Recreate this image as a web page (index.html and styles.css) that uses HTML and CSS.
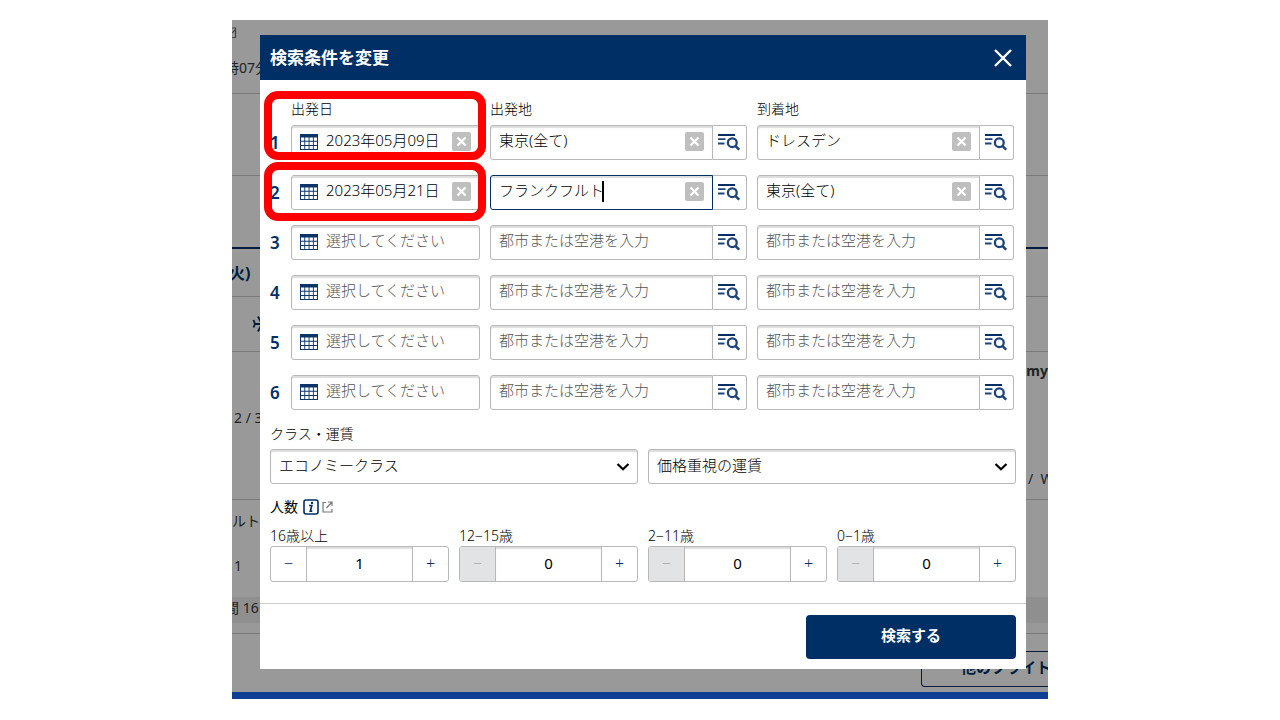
FILE: index.html
```html
<!DOCTYPE html>
<html lang="ja">
<head>
<meta charset="utf-8">
<title>検索条件を変更</title>
<link rel="stylesheet" href="styles.css">
</head>
<body>
<svg class="sprite" aria-hidden="true">
  <symbol id="calendar" viewBox="0 0 18 16">
    <path d="M0 0h18v16H0z" fill="#0b3468"/>
    <path d="M1 3.500h3.300v3.300H1zM5.200 3.500h3.400v3.300H5.200zM9.500 3.500h3.400v3.300H9.500zM13.800 3.500H17v3.300h-3.200zM1 7.700h3.300V11H1zM5.200 7.700h3.400V11H5.200zM9.500 7.700h3.400V11H9.500zM13.800 7.700H17V11h-3.200zM1 11.900h3.300V15H1zM5.200 11.900h3.400V15H5.200zM9.500 11.900h3.400V15H9.500zM13.800 11.900H17V15h-3.200z" fill="#fff"/>
  </symbol>
  <symbol id="lookup" viewBox="0 0 22 18">
    <path d="M0 2h17" fill="none" stroke="#002f65" stroke-width="2"/>
    <path d="M0 6.200h7.500M0 10.500h6.500" fill="none" stroke="#1d457a" stroke-width="1.800"/>
    <circle cx="14.300" cy="9.700" r="4.400" fill="none" stroke="#1d457a" stroke-width="2.300"/>
    <path d="M17.300 12.800l3.900 3.900" stroke="#1d457a" stroke-width="2.600"/>
  </symbol>
  <symbol id="cross" viewBox="0 0 19 19">
    <rect width="19" height="19" rx="2" fill="#bfbfbf"/>
    <path d="M5.500 5.500l8 8M13.500 5.500l-8 8" stroke="#fff" stroke-width="2.400"/>
  </symbol>
  <symbol id="chevron" viewBox="0 0 14 10">
    <path d="M1.500 2l5.500 5.300L12.500 2" fill="none" stroke="#000" stroke-width="2.200"/>
  </symbol>
</svg>

<div class="stage">
  <div class="backdrop" aria-hidden="true">
    <div class="line line-top">
      <svg width="5" height="12" viewBox="0 0 5 12"><path d="M0 1h3.500v9.500H0M0 6l3-3" fill="none" stroke="#444" stroke-width="1.200"/></svg>
      <span class="time">時07分</span>
    </div>
    <div class="line line-blank"></div>
    <div class="line line-navy"></div>
    <div class="line line-day"><b>火)</b></div>
    <div class="line line-plane">
      <svg width="14" height="18" viewBox="0 0 14 18"><path d="M1.500 5l1.500 4-1.500 3.500M2 9h12M6 1.500L10 9l-4 7.500" fill="none" stroke="#001c3d" stroke-width="1.800"/></svg>
    </div>
    <div class="line line-fare"><b class="right">omy</b><span class="stop">2 / 3</span><span class="wifi">/ &nbsp;W</span></div>
    <div class="line-city"><span>ルト</span><span class="num">1</span></div>
    <div class="band">間 16</div>
    <div class="line line-gap"></div>
    <div class="other"><span class="other-box">他のフライト</span></div>
  </div>

  <form class="dialog" role="dialog" aria-labelledby="title">
    <header class="head">
      <h1 id="title">検索条件を変更</h1>
      <button type="button" class="close" aria-label="閉じる"><svg width="18" height="18" viewBox="0 0 18 18"><path d="M1 1l16 16M17 1L1 17" stroke="#fff" stroke-width="2.400"/></svg></button>
    </header>

    <div class="body">
      <div class="routes labels"><span></span><span>出発日</span><span>出発地</span><span>到着地</span></div>

      <div class="routes">
        <span class="no">1</span>
        <div class="cell"><div class="field"><svg class="cal"><use href="#calendar"/></svg><input aria-label="出発日 1" value="2023年05月09日"><button type="button" class="clear" aria-label="消去"><svg><use href="#cross"/></svg></button></div><i class="frame frame-first"></i></div>
        <div class="place"><div class="field"><input aria-label="出発地 1" value="東京(全て)"><button type="button" class="clear" aria-label="消去"><svg><use href="#cross"/></svg></button></div><button type="button" class="list" aria-label="一覧から選択"><svg><use href="#lookup"/></svg></button></div>
        <div class="place"><div class="field"><input aria-label="到着地 1" value="ドレスデン"><button type="button" class="clear" aria-label="消去"><svg><use href="#cross"/></svg></button></div><button type="button" class="list" aria-label="一覧から選択"><svg><use href="#lookup"/></svg></button></div>
      </div>
      <div class="routes">
        <span class="no">2</span>
        <div class="cell"><div class="field"><svg class="cal"><use href="#calendar"/></svg><input aria-label="出発日 2" value="2023年05月21日"><button type="button" class="clear" aria-label="消去"><svg><use href="#cross"/></svg></button></div><i class="frame frame-second"></i></div>
        <div class="place"><div class="field active"><input aria-label="出発地 2" value="フランクフルト"><i class="caret"></i><button type="button" class="clear" aria-label="消去"><svg><use href="#cross"/></svg></button></div><button type="button" class="list" aria-label="一覧から選択"><svg><use href="#lookup"/></svg></button></div>
        <div class="place"><div class="field"><input aria-label="到着地 2" value="東京(全て)"><button type="button" class="clear" aria-label="消去"><svg><use href="#cross"/></svg></button></div><button type="button" class="list" aria-label="一覧から選択"><svg><use href="#lookup"/></svg></button></div>
      </div>
      <div class="routes">
        <span class="no">3</span>
        <div class="cell"><div class="field"><svg class="cal"><use href="#calendar"/></svg><input aria-label="出発日 3" placeholder="選択してください"></div></div>
        <div class="place"><div class="field"><input aria-label="出発地 3" placeholder="都市または空港を入力"></div><button type="button" class="list" aria-label="一覧から選択"><svg><use href="#lookup"/></svg></button></div>
        <div class="place"><div class="field"><input aria-label="到着地 3" placeholder="都市または空港を入力"></div><button type="button" class="list" aria-label="一覧から選択"><svg><use href="#lookup"/></svg></button></div>
      </div>
      <div class="routes">
        <span class="no">4</span>
        <div class="cell"><div class="field"><svg class="cal"><use href="#calendar"/></svg><input aria-label="出発日 4" placeholder="選択してください"></div></div>
        <div class="place"><div class="field"><input aria-label="出発地 4" placeholder="都市または空港を入力"></div><button type="button" class="list" aria-label="一覧から選択"><svg><use href="#lookup"/></svg></button></div>
        <div class="place"><div class="field"><input aria-label="到着地 4" placeholder="都市または空港を入力"></div><button type="button" class="list" aria-label="一覧から選択"><svg><use href="#lookup"/></svg></button></div>
      </div>
      <div class="routes">
        <span class="no">5</span>
        <div class="cell"><div class="field"><svg class="cal"><use href="#calendar"/></svg><input aria-label="出発日 5" placeholder="選択してください"></div></div>
        <div class="place"><div class="field"><input aria-label="出発地 5" placeholder="都市または空港を入力"></div><button type="button" class="list" aria-label="一覧から選択"><svg><use href="#lookup"/></svg></button></div>
        <div class="place"><div class="field"><input aria-label="到着地 5" placeholder="都市または空港を入力"></div><button type="button" class="list" aria-label="一覧から選択"><svg><use href="#lookup"/></svg></button></div>
      </div>
      <div class="routes">
        <span class="no">6</span>
        <div class="cell"><div class="field"><svg class="cal"><use href="#calendar"/></svg><input aria-label="出発日 6" placeholder="選択してください"></div></div>
        <div class="place"><div class="field"><input aria-label="出発地 6" placeholder="都市または空港を入力"></div><button type="button" class="list" aria-label="一覧から選択"><svg><use href="#lookup"/></svg></button></div>
        <div class="place"><div class="field"><input aria-label="到着地 6" placeholder="都市または空港を入力"></div><button type="button" class="list" aria-label="一覧から選択"><svg><use href="#lookup"/></svg></button></div>
      </div>

      <label class="section" for="cabin">クラス・運賃</label>
      <div class="selects">
        <div class="select"><select id="cabin"><option>エコノミークラス</option></select><svg><use href="#chevron"/></svg></div>
        <div class="select"><select aria-label="運賃"><option>価格重視の運賃</option></select><svg><use href="#chevron"/></svg></div>
      </div>

      <div class="people"><b>人数</b>
        <a href="#info" class="info" aria-label="人数について">
          <svg width="16" height="16" viewBox="0 0 16 16"><rect x="1" y="1" width="14" height="14" rx="2" fill="#fff" stroke="#002f65" stroke-width="1.600"/><path d="M6 6.500h2.800L7.300 12.200h2" fill="none" stroke="#002f65" stroke-width="1.700"/><circle cx="9" cy="3.900" r="1.200" fill="#002f65"/></svg>
          <svg width="11" height="12" viewBox="0 0 11 12"><path d="M4 1.500H1V11h9V8M6 1h4v4M10 1L4.500 7" fill="none" stroke="#777" stroke-width="1.200"/></svg>
        </a>
      </div>
      <div class="counts">
        <div><label for="adult">16歳以上</label><div class="stepper"><button type="button">−</button><input id="adult" value="1"><button type="button">+</button></div></div>
        <div><label for="young">12−15歳</label><div class="stepper"><button type="button" disabled>−</button><input id="young" value="0"><button type="button">+</button></div></div>
        <div><label for="child">2−11歳</label><div class="stepper"><button type="button" disabled>−</button><input id="child" value="0"><button type="button">+</button></div></div>
        <div><label for="infant">0−1歳</label><div class="stepper"><button type="button" disabled>−</button><input id="infant" value="0"><button type="button">+</button></div></div>
      </div>
    </div>

    <footer class="foot"><button type="submit" class="submit">検索する</button></footer>
  </form>
  <div class="bar"></div>
</div>
</body>
</html>
```
FILE: styles.css
```css
* { box-sizing: border-box; }
body {
  margin: 0;
  padding: 20px 232px;
  background: #fff;
  color: #000;
  font: 300 14px/20px "Noto Sans", "Noto Sans CJK JP", sans-serif;
}
button, input, select { font: inherit; color: inherit; margin: 0; }
button { padding: 0; border: 0; background: none; display: flex; align-items: center; justify-content: center; }
svg { display: block; flex: none; }
.sprite { position: absolute; width: 0; height: 0; }

.stage { display: grid; grid-template-columns: minmax(0, 1fr); }
.backdrop, .dialog { grid-row: 1; grid-column: 1; }
.bar { height: 7px; background: #0f3f94; }

/* Dimmed results page behind the dialog */
.backdrop { display: flex; flex-direction: column; overflow: hidden; background: #999; white-space: nowrap; font-weight: 400; color: #222; }
.line { border-bottom: 1px solid #7a7a7a; display: flex; flex-direction: column; }
.line-top { height: 74px; padding-top: 7px; gap: 19px; }
.time { margin-left: -7px; }
.line-blank { height: 82px; }
.line-navy { height: 73px; border-bottom: 2px solid #001c3d; }
.line-day { height: 48px; padding-top: 14px; font-size: 16px; color: #001c3d; text-indent: -3px; }
.line-plane { height: 55px; padding: 18px 0 0 20px; }
.line-fare { height: 148px; padding-top: 9px; }
.right { align-self: flex-end; }
.stop { margin: 27px 0 0 2px; }
.wifi { align-self: flex-end; width: 20px; margin-top: 41px; }
.line-city { height: 97px; padding-top: 11px; display: flex; flex-direction: column; gap: 25px; }
.line-city .num { margin-left: 2px; }
.band { height: 26px; padding-top: 1px; background: #8f8f8f; text-indent: -7px; }
.line-gap { height: 11px; }
.other { flex: 1; display: flex; justify-content: flex-end; padding-top: 17px; }
.other-box { width: 127px; height: 36px; padding: 5px 0 0 39px; border: 1px solid #001c3d; border-right: 0; border-radius: 4px 0 0 4px; color: #001c3d; font-size: 15px; font-weight: 700; }

/* Dialog */
.dialog { margin: 15px 22px 23px 28px; background: #fff; z-index: 1; }
.head { display: flex; align-items: center; justify-content: space-between; height: 45px; padding: 0 14px 0 10px; background: #002f65; color: #fff; }
.head h1 { margin: 0; font-size: 17px; font-weight: 700; }
.body { padding: 19px 10px 21px; }

.routes { display: grid; grid-template-columns: 11px 189fr 257fr 257fr; gap: 10px; margin: 0 2px 15px 0; }
.labels { margin-bottom: 6px; }
.no { align-self: center; color: #002f65; font-size: 17px; font-weight: 600; }
.cell { position: relative; display: flex; }
.place { display: flex; min-width: 0; }
.field { position: relative; flex: 1; min-width: 0; height: 35px; display: flex; align-items: center; padding: 0 8px 2px; border: 1px solid #b8b8b8; border-radius: 3px; box-shadow: inset 0 2px 1px #ddd; }
.field input { flex: 1; min-width: 0; width: 0; padding: 0 0 3px; border: 0; outline: 0; background: none; font-size: 15px; line-height: 22px; color: #000; }
.field input::placeholder { color: #555; opacity: 1; }
.place .field { border-radius: 3px 0 0 3px; }
.list { width: 34px; padding: 0 2px 2px 0; border: 1px solid #b8b8b8; border-left: 0; border-radius: 0 3px 3px 0; }
.list svg { width: 22px; height: 18px; }
.cal { width: 18px; height: 16px; margin-right: 8px; }
.clear svg { width: 19px; height: 19px; }
.active { border-color: #002f65; }
.caret { position: absolute; left: 111px; top: 5px; width: 2px; height: 21px; background: #000; }

/* Red callout outlines around the two dates */
.frame { position: absolute; left: -27px; right: -6px; border: 8px solid #f00; border-radius: 14px; pointer-events: none; }
.frame-first { top: -34px; bottom: 0; }
.frame-second { top: -13px; bottom: -11px; }

.section { display: block; margin: -1px 0 5px; }
.selects { display: grid; grid-template-columns: 1fr 1fr; gap: 10px; }
.select { position: relative; }
.select select { appearance: none; width: 100%; height: 35px; padding: 0 8px 3px; border: 1px solid #b8b8b8; border-radius: 3px; background: #fff; box-shadow: inset 0 2px 1px #ddd; font-size: 15px; color: #000; }
.select svg { position: absolute; right: 8px; top: 13px; width: 14px; height: 10px; pointer-events: none; }

.people { display: flex; align-items: center; gap: 5px; margin: 13px 0 9px; }
.info { display: flex; align-items: center; gap: 3px; }
.counts { display: grid; grid-template-columns: repeat(4, 1fr); gap: 10px; }
.counts label { display: block; }
.stepper { display: flex; height: 36px; border: 1px solid #b8b8b8; border-radius: 3px; overflow: hidden; }
.stepper button { width: 35px; padding-bottom: 3px; font-size: 16px; color: #002f65; }
.stepper button:disabled { background: #e1e3e5; color: #aaa; }
.stepper input { flex: 1; min-width: 0; width: 0; padding: 0 0 2px; border: solid #b8b8b8; border-width: 0 1px; text-align: center; font-size: 15px; font-weight: 400; color: #000; box-shadow: inset 0 2px 1px #ddd; }

.foot { display: flex; justify-content: flex-end; padding: 11px 10px 10px; border-top: 1px solid #ccc; }
.submit { width: 210px; height: 44px; padding-bottom: 4px; border-radius: 4px; background: #002f65; color: #fff; font-size: 15px; font-weight: 700; }
```
